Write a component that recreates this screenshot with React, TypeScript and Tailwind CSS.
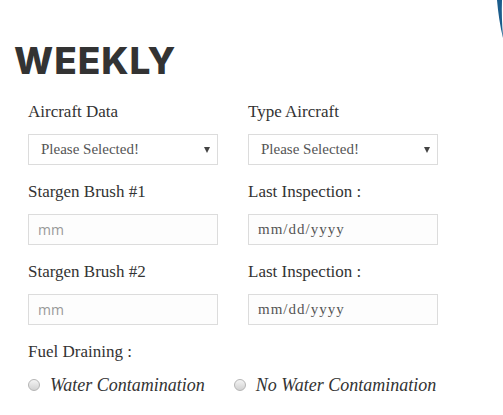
import { useState } from "react";

const serif = "font-['Liberation_Serif',serif]";

function Field({ label, children }: { label: string; children: React.ReactNode }) {
  return (
    <div className="flex flex-col">
      <label className={`${serif} text-[17px] leading-[20px] text-[#333] mb-[12px]`}>{label}</label>
      {children}
    </div>
  );
}

function SelectBox() {
  return (
    <div className="relative w-[190px] h-[31px] border border-[#dcdcdc] bg-white flex items-center">
      <span className={`${serif} pl-[12px] text-[15px] text-[#555]`}>Please Selected!</span>
      <span className="absolute right-[7px] top-[12px] w-0 h-0 border-l-[3.5px] border-r-[3.5px] border-t-[6px] border-l-transparent border-r-transparent border-t-[#444]" />
    </div>
  );
}

function TextBox({ placeholder, sans }: { placeholder: string; sans?: boolean }) {
  return (
    <input
      placeholder={placeholder}
      className={`w-[190px] h-[31px] border border-[#dcdcdc] bg-[#fdfdfd] px-[9px] text-[14px] outline-none ${
        sans
          ? "font-['Open_Sans',sans-serif] placeholder:text-[#999]"
          : `${serif} text-[15px] tracking-[1px] placeholder:text-[#555]`
      }`}
    />
  );
}

function Radio({ label, checked, onClick }: { label: string; checked: boolean; onClick: () => void }) {
  return (
    <label className="flex items-center cursor-pointer leading-[20px]" onClick={onClick}>
      <span className="w-[12px] h-[12px] rounded-full border border-[#b5b5b5] bg-gradient-to-b from-[#f4f4f4] to-[#d2d2d2] flex items-center justify-center">
        {checked && <span className="w-[5px] h-[5px] rounded-full bg-[#333]" />}
      </span>
      <span className={`${serif} italic text-[18px] text-[#333] ml-[10px]`}>{label}</span>
    </label>
  );
}

export default function App() {
  const [fuel, setFuel] = useState("");

  return (
    <div className="relative w-[503px] h-[415px] bg-white overflow-hidden">
      <svg className="absolute top-0 right-0" width="9" height="40" viewBox="0 0 9 40">
        <path d="M3 0 L8 0 C7.5 12 8 24 9 36 L9 38 C6 26 4 12 3 0 Z" fill="#1b5d8c" />
      </svg>

      <h1 className="font-['Inter',sans-serif] font-extrabold text-[37px] leading-none tracking-[1px] text-[#333] pl-[14px] pt-[42px]">
        WEEKLY
      </h1>

      <div className="pl-[28px] pt-[23px] grid grid-cols-[190px_190px] gap-x-[30px] gap-y-[17px]">
        <Field label="Aircraft Data">
          <SelectBox />
        </Field>
        <Field label="Type Aircraft">
          <SelectBox />
        </Field>
        <Field label="Stargen Brush #1">
          <TextBox placeholder="mm" sans />
        </Field>
        <Field label="Last Inspection :">
          <TextBox placeholder="mm/dd/yyyy" />
        </Field>
        <Field label="Stargen Brush #2">
          <TextBox placeholder="mm" sans />
        </Field>
        <Field label="Last Inspection :">
          <TextBox placeholder="mm/dd/yyyy" />
        </Field>
      </div>

      <div className="pl-[28px] pt-[17px]">
        <div className={`${serif} text-[17px] leading-[20px] text-[#333]`}>Fuel Draining :</div>
        <div className="flex mt-[13px] gap-[29px]">
          <Radio label="Water Contamination" checked={fuel === "water"} onClick={() => setFuel("water")} />
          <Radio label="No Water Contamination" checked={fuel === "none"} onClick={() => setFuel("none")} />
        </div>
      </div>
    </div>
  );
}
